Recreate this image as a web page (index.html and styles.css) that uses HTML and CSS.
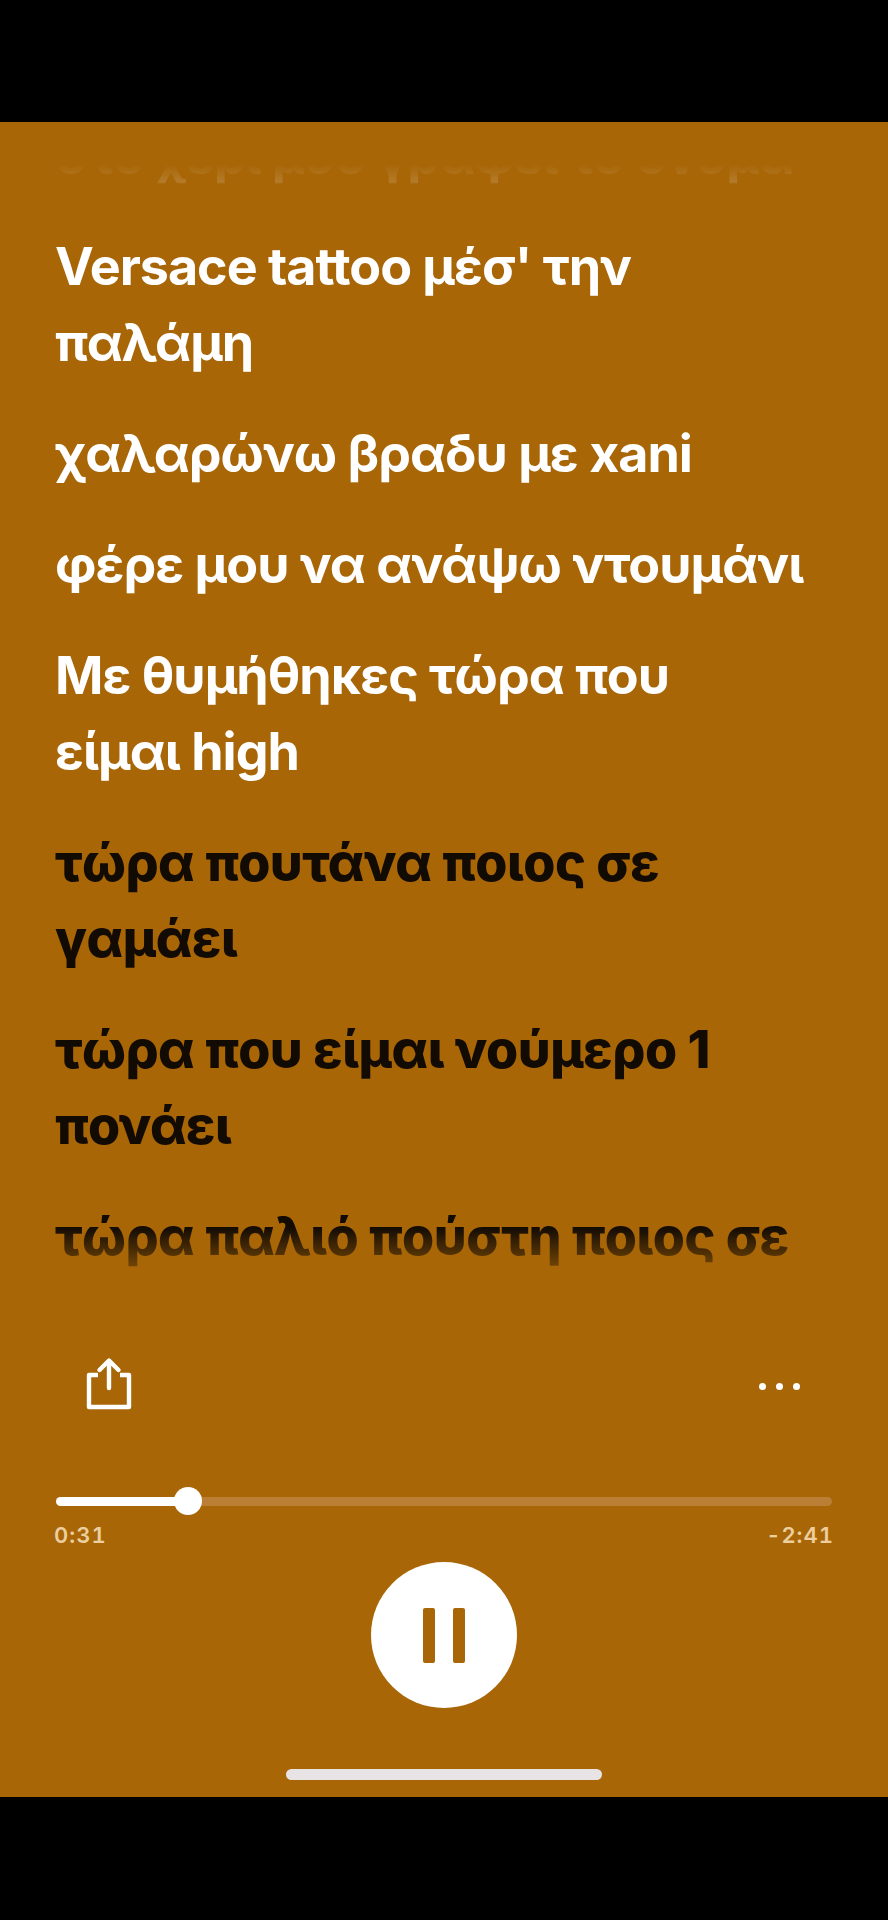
FILE: index.html
```html
<!DOCTYPE html>
<html lang="el">
<head>
    <meta charset="UTF-8">
    <meta name="viewport" content="width=device-width, initial-scale=1.0">
    <title>Lyrics</title>
    <link rel="stylesheet" href="styles.css">
</head>
<body>
    <div class="screen">
        <div class="lyrics">
            <p class="line line-past line-cut">στο χέρι μου γράφει το όνομα</p>
            <p class="line line-past">Versace tattoo μέσ' την παλάμη</p>
            <p class="line line-past">χαλαρώνω βραδυ με xani</p>
            <p class="line line-past">φέρε μου να ανάψω ντουμάνι</p>
            <p class="line line-past">Με θυμήθηκες τώρα που<br>είμαι high</p>
            <p class="line">τώρα πουτάνα ποιος σε γαμάει</p>
            <p class="line">τώρα που είμαι νούμερο 1 πονάει</p>
            <p class="line">τώρα παλιό πούστη ποιος σε γαμάει</p>
        </div>

        <div class="actions">
            <svg class="share" width="48" height="56" viewBox="0 0 48 56" fill="none" stroke="#fff" stroke-width="4.4">
                <path d="M13 20H4V52H44V20H35" stroke-linejoin="round"/>
                <path d="M24 33V7" stroke-linecap="round"/>
                <path d="M14.5 15L24 5.5L33.5 15" stroke-linecap="round" stroke-linejoin="round"/>
            </svg>
            <div class="dots"><span></span><span></span><span></span></div>
        </div>

        <div class="progress">
            <div class="track">
                <div class="track-fill" style="width: 17%"></div>
                <div class="knob"></div>
            </div>
            <div class="times"><span>0:31</span><span>-2:41</span></div>
        </div>

        <div class="play">
            <div class="pause-btn"><span></span><span></span></div>
        </div>

        <div class="home-bar"></div>
    </div>
</body>
</html>
```

FILE: styles.css
```css
html, body {
    margin: 0;
    background: #000;
}
body {
    height: 1920px;
    overflow: hidden;
    padding-top: 122px;
    box-sizing: border-box;
    font-family: 'Inter', 'Noto Sans', sans-serif;
}
.screen {
    height: 1675px;
    background: #a86607;
    display: flex;
    flex-direction: column;
}
.lyrics {
    height: 1173px;
    flex: none;
    overflow: hidden;
    padding: 0 0 0 55px;
    -webkit-mask-image: linear-gradient(to bottom, transparent 42px, rgba(0, 0, 0, 0.14) 60px, rgba(0, 0, 0, 0) 62px, #000 118px, #000 1105px, transparent 1168px);
    mask-image: linear-gradient(to bottom, transparent 42px, rgba(0, 0, 0, 0.14) 60px, rgba(0, 0, 0, 0) 62px, #000 118px, #000 1105px, transparent 1168px);
}
.line {
    margin: 0 0 35px;
    width: 755px;
    font-size: 52px;
    line-height: 76px;
    font-weight: 800;
    letter-spacing: -0.5px;
    color: #120b04;
}
.line-past {
    font-weight: 700;
    letter-spacing: -1px;
    color: #fff;
}
.line-cut {
    margin-top: -4px;
    white-space: nowrap;
}
.actions {
    display: flex;
    justify-content: space-between;
    align-items: center;
    height: 56px;
    margin-top: 60px;
    padding: 0 88px 0 85px;
}
.dots {
    display: flex;
    gap: 10px;
    margin-top: 6px;
}
.dots span {
    width: 7px;
    height: 7px;
    border-radius: 50%;
    background: #fff;
}
.progress {
    margin-top: 86px;
    padding: 0 54px;
}
.track {
    position: relative;
    margin: 0 2px;
    height: 9px;
    border-radius: 5px;
    background: #ba7e35;
}
.track-fill {
    height: 100%;
    border-radius: 5px;
    background: #fff;
}
.knob {
    position: absolute;
    left: 118px;
    top: -10px;
    width: 28px;
    height: 28px;
    border-radius: 50%;
    background: #fff;
}
.times {
    display: flex;
    justify-content: space-between;
    margin-top: 16px;
    font-size: 22px;
    line-height: 26px;
    font-weight: 600;
    font-variant-numeric: tabular-nums;
    letter-spacing: 1px;
    color: #eccf9f;
}
.play {
    display: flex;
    justify-content: center;
    margin-top: 14px;
}
.pause-btn {
    width: 146px;
    height: 146px;
    border-radius: 50%;
    background: #fff;
    display: flex;
    justify-content: center;
    align-items: center;
    gap: 18px;
}
.pause-btn span {
    width: 12px;
    height: 55px;
    border-radius: 2px;
    background: #a86607;
}
.home-bar {
    width: 316px;
    height: 11px;
    margin: 61px auto 0;
    border-radius: 6px;
    background: #e8e4e6;
}
```
